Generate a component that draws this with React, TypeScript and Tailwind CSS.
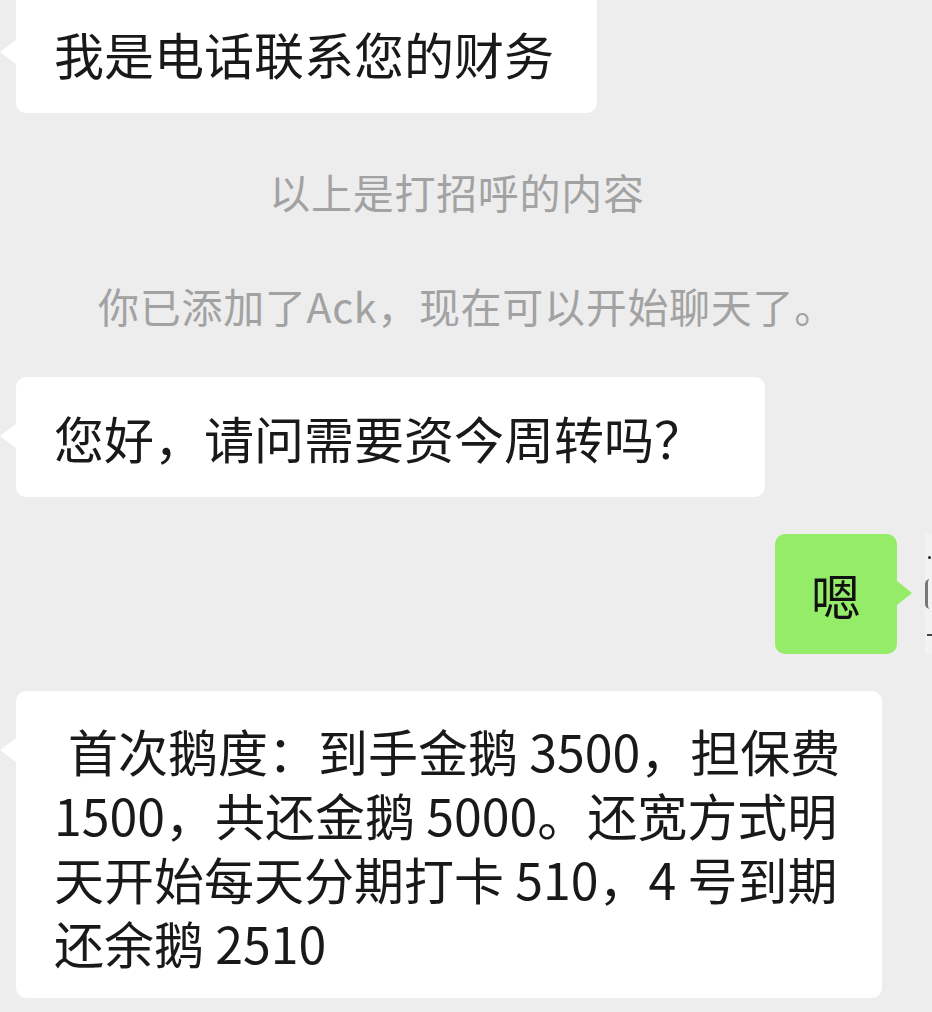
import React from 'react';

const font = { fontFamily: '"Noto Sans CJK SC", "Noto Sans", sans-serif' };

function LeftBubble({ children, className = '', pad = 'px-[38px] py-[28px]' }: { children: React.ReactNode; className?: string; pad?: string }) {
  return (
    <div className={`flex items-start ${className}`}>
      <div className="mt-[47px] h-0 w-0 shrink-0 border-y-[12px] border-r-[16px] border-y-transparent border-r-white" />
      <div className={`rounded-[10px] bg-white text-[50px] leading-[64px] text-[#191919] ${pad}`}>
        {children}
      </div>
    </div>
  );
}

function SystemLine({ text, className = '' }: { text: string; className?: string }) {
  return (
    <div className={`text-center text-[41px] leading-[50px] tracking-[0.7px] text-[#a2a2a2] ${className}`}>
      {text}
    </div>
  );
}

export default function App() {
  return (
    <div className="h-[1012px] w-[932px] overflow-hidden bg-[#ededed]" style={font}>
      <div className="flex flex-col">
        <LeftBubble className="-mt-[7px] self-start" pad="pl-[38px] pr-[43px] py-[28px]">
          我是电话联系您的财务
        </LeftBubble>

        <SystemLine text="以上是打招呼的内容" className="mt-[53px] pr-[18px]" />
        <SystemLine text="你已添加了Ack，现在可以开始聊天了。" className="mt-[64px] pl-[2px]" />

        <LeftBubble className="mt-[47px] self-start" pad="pl-[38px] pr-[61px] py-[28px]">
          您好，请问需要资今周转吗？
        </LeftBubble>

        {/* own message */}
        <div className="mt-[37px] flex items-start justify-end">
          <div className="rounded-[10px] bg-[#95ec69] px-[36px] py-[28px] text-[50px] leading-[64px] text-[#111]">
            嗯
          </div>
          <div className="mt-[47px] h-0 w-0 shrink-0 border-y-[12px] border-l-[15px] border-y-transparent border-l-[#95ec69]" />
          <div className="ml-[13px] flex h-[120px] w-[7px] shrink-0 flex-col items-start bg-[#f2f2f2]">
            <div className="mt-[22px] ml-[3px] h-[3px] w-[3px] rounded-full bg-[#222]" />
            <div className="mt-[20px] h-[30px] w-[10px] rounded-full border-l-[3px] border-[#777]" />
            <div className="mt-[25px] ml-[2px] h-[2px] w-[5px] bg-[#444]" />
          </div>
        </div>

        <LeftBubble className="mt-[37px] self-start" pad="pl-[38px] pr-[42px] pt-[27px] pb-[24px]">
          <div className="pl-[14px]">首次鹅度：到手金鹅 3500，担保费</div>
          <div>1500，共还金鹅 5000。还宽方式明</div>
          <div>天开始每天分期打卡 510，4 号到期</div>
          <div>还余鹅 2510</div>
        </LeftBubble>
      </div>
    </div>
  );
}
